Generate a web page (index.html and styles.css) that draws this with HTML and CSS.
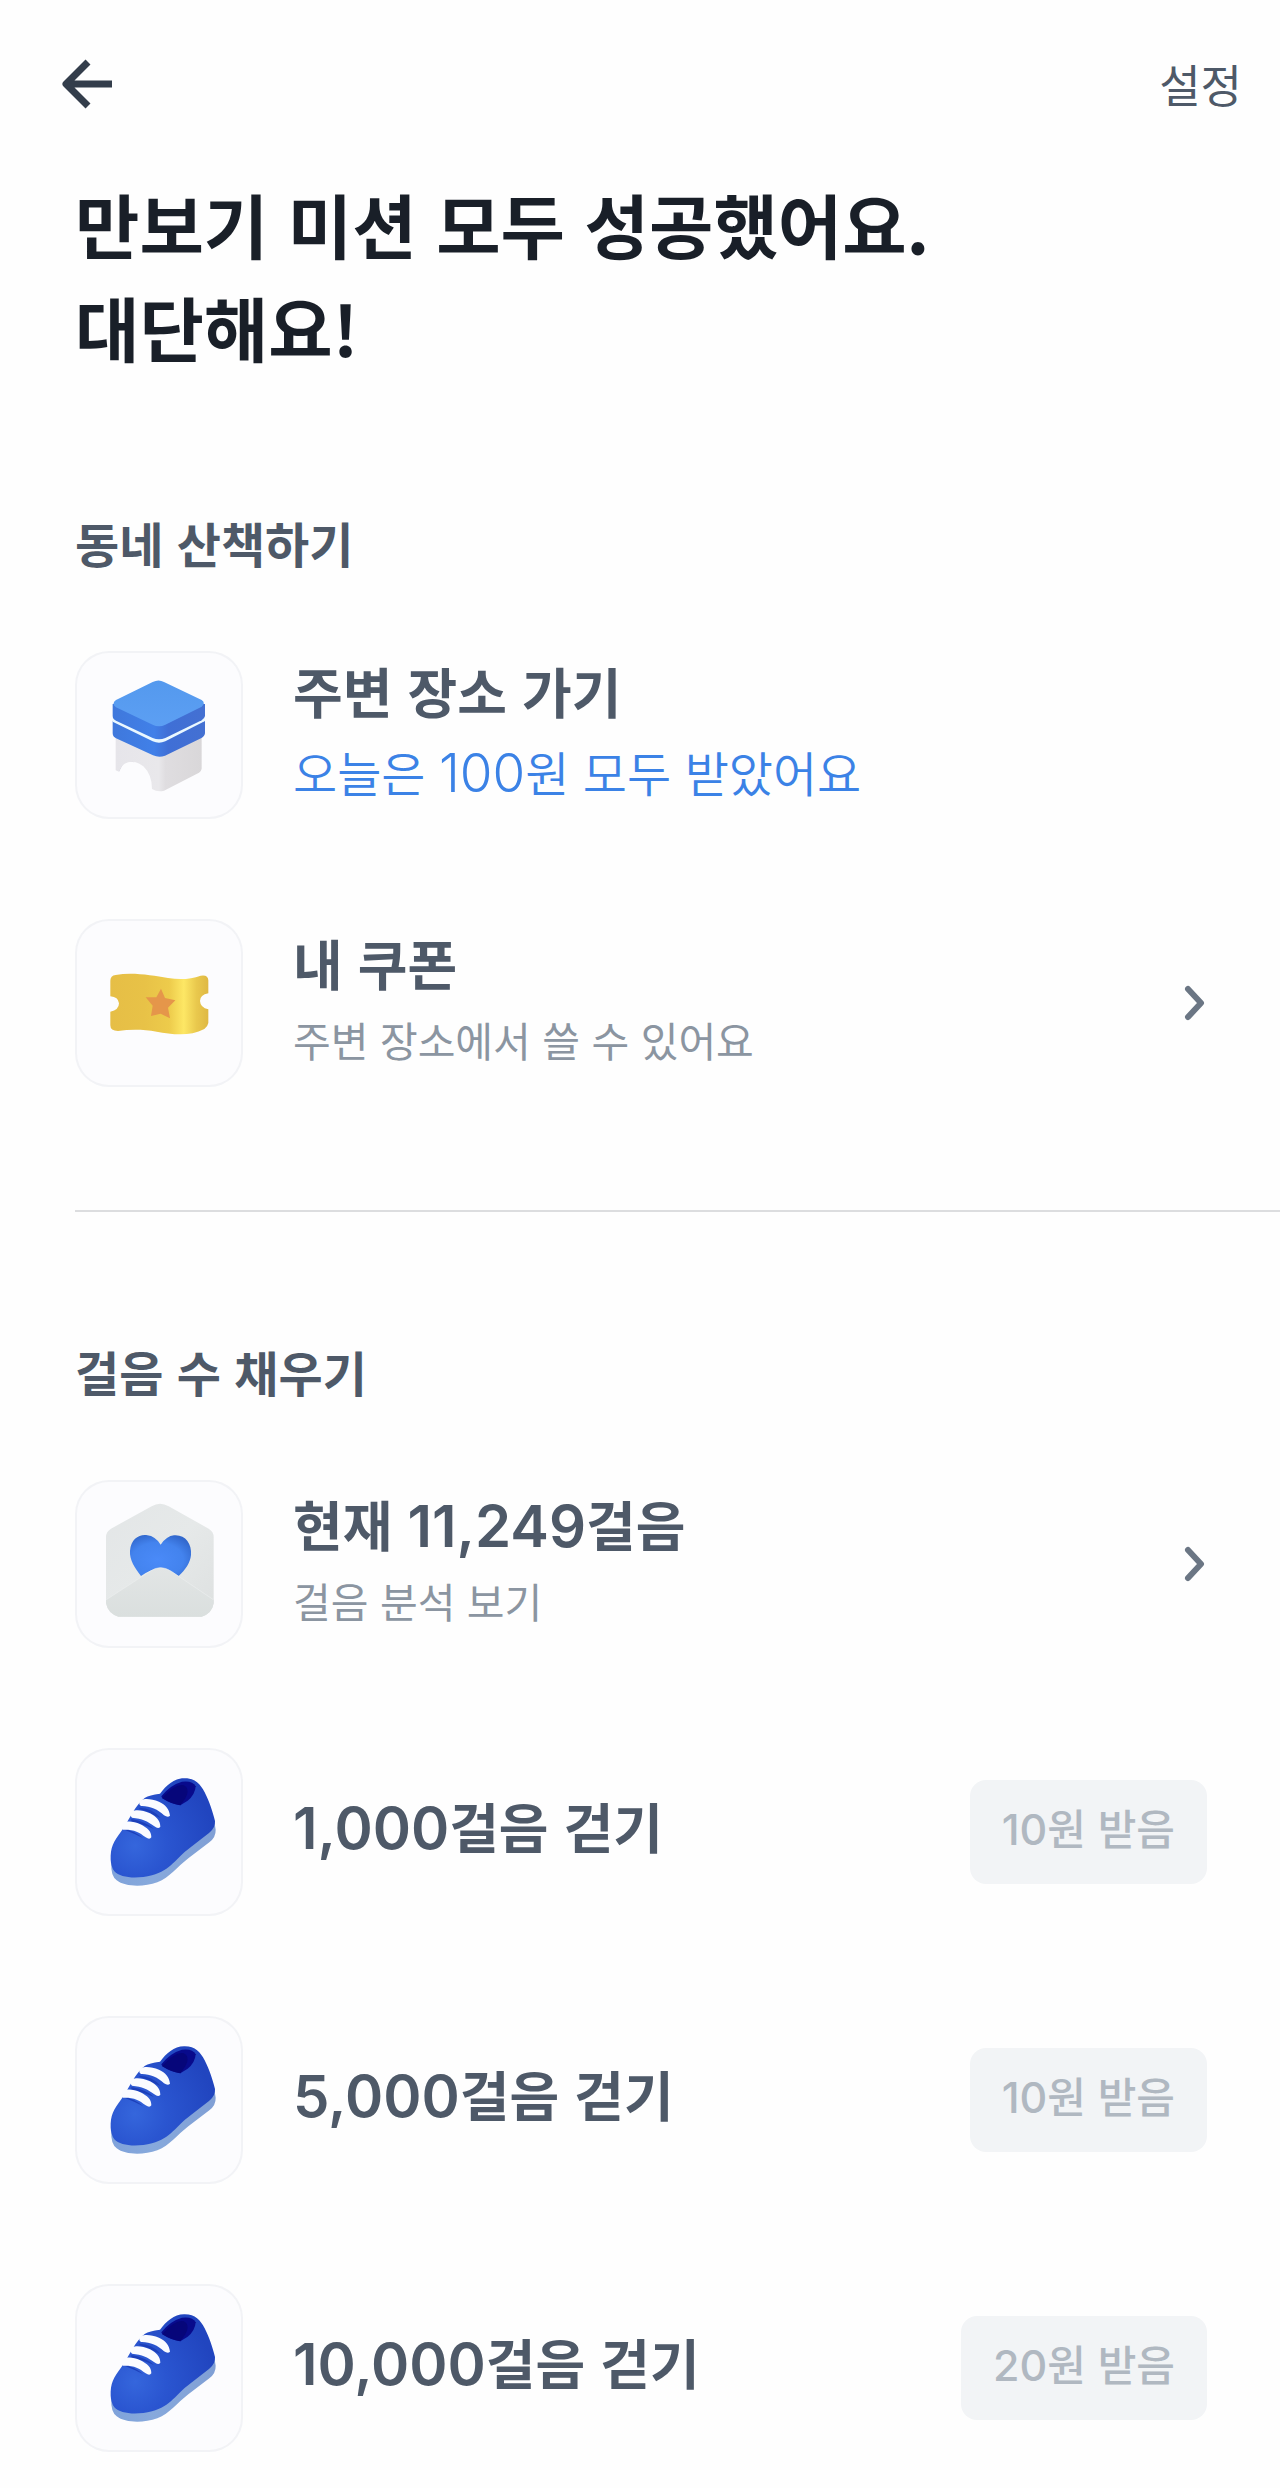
FILE: index.html
```html
<!DOCTYPE html>
<html lang="ko">
<head>
<meta charset="utf-8">
<meta name="viewport" content="width=device-width, initial-scale=1">
<title>만보기</title>
<link rel="stylesheet" href="styles.css">
</head>
<body>
<svg class="defs" width="0" height="0" aria-hidden="true">
  <defs>
    <linearGradient id="seatTop" x1="0" y1="0" x2="0" y2="1"><stop offset="0" stop-color="#5499ee"/><stop offset="1" stop-color="#5c9ff3"/></linearGradient>
    <linearGradient id="seatSide" x1="0" y1="0" x2="1" y2="0"><stop offset="0" stop-color="#3f78dc"/><stop offset=".45" stop-color="#4180e8"/><stop offset=".6" stop-color="#3f6fd6"/><stop offset="1" stop-color="#4470d2"/></linearGradient>
    <linearGradient id="legs" x1="0" y1="0" x2="1" y2="0"><stop offset="0" stop-color="#e6e5ea"/><stop offset=".5" stop-color="#e9e8eb"/><stop offset=".58" stop-color="#dfdde0"/><stop offset="1" stop-color="#d9d7d9"/></linearGradient>
    <linearGradient id="gold" x1="0" y1="0" x2="1" y2="0"><stop offset="0" stop-color="#e6be46"/><stop offset=".35" stop-color="#e8c247"/><stop offset=".6" stop-color="#edcb4b"/><stop offset=".75" stop-color="#fde765"/><stop offset=".88" stop-color="#e9c84d"/><stop offset="1" stop-color="#dfb843"/></linearGradient>
    <linearGradient id="paper" x1="0" y1="0" x2="1" y2="1"><stop offset="0" stop-color="#e3e6e7"/><stop offset=".5" stop-color="#e6e9e9"/><stop offset="1" stop-color="#dde0e0"/></linearGradient>
    <linearGradient id="fold" x1="0" y1="0" x2="0" y2="1"><stop offset="0" stop-color="#e2e5e5"/><stop offset="1" stop-color="#dadfde"/></linearGradient>
    <radialGradient id="heart" cx=".45" cy=".6" r=".65"><stop offset="0" stop-color="#4a8af8"/><stop offset=".65" stop-color="#4383ee"/><stop offset="1" stop-color="#3268cd"/></radialGradient>
    <radialGradient id="shoe" gradientUnits="userSpaceOnUse" cx="225" cy="330" r="240"><stop offset="0" stop-color="#3566dc"/><stop offset=".4" stop-color="#2a55d0"/><stop offset="1" stop-color="#2145bf"/></radialGradient>
    <linearGradient id="sole" x1="0" y1="0" x2="1" y2="0"><stop offset="0" stop-color="#7fa2da"/><stop offset=".4" stop-color="#87a9dc"/><stop offset="1" stop-color="#809fd5"/></linearGradient>
    <symbol id="icon-shoe" viewBox="45 37 504 504">
      <path fill="url(#sole)" d="M154 385Q152 420 170 434C195 454 250 455 292 440C330 425 350 395 385 368L448 320Q468 304 467 282Q466 262 452 250L180 370Z"/>
      <path fill="url(#shoe)" d="M152 372C151 335 160 318 185 285C208 252 225 208 255 186Q268 178 300 174C318 150 342 128 372 128C405 127 421 145 434 170C449 201 457 224 465 256Q467 276 447 292L390 336C349 366 333 403 276 419C230 431 181 427 163 407Q153 393 152 372Z"/>
      <path fill="#080a8c" d="M304 182Q330 148 366 138Q398 134 407 152Q405 178 383 195L361 209Q330 204 307 188Z"/>
      <path fill="#06067a" d="M316 177Q345 146 370 148Q392 158 376 188L361 209Q336 205 307 188Z"/>
      <g fill="#1c3fb9"><path d="M238 216Q277 217 302 247L285 240Q262 226 238 220Z"/><path d="M214 250Q258 258 282 280L262 272Q232 260 214 258Z"/><path d="M188 280Q220 283 250 308L224 295Z"/></g>
      <g fill="#fafbff"><path d="M238 202C240 186 270 187 297 198C317 207 328 221 330 240Q324 247 312 239C294 221 268 210 243 211Q237 208 238 202Z"/><path d="M212 236C214 219 243 221 270 233C288 243 301 254 301 273Q295 281 283 272C262 256 247 249 216 246Q210 242 212 236Z"/><path d="M184 274C184 255 213 253 241 266C262 277 274 286 274 305Q269 313 257 305C237 289 222 281 189 282Q184 279 184 274Z"/></g>
    </symbol>
    <symbol id="icon-chevron" viewBox="0 0 24 40"><path d="M5 6L18 20L5 34" fill="none" stroke="#6b7684" stroke-width="6" stroke-linecap="round" stroke-linejoin="round"/></symbol>
  </defs>
</svg>

<header class="topbar">
  <button class="back" type="button" aria-label="뒤로">
    <svg viewBox="0 0 52 52" aria-hidden="true"><path d="M26 4L4 26L26 48M4 26H50" fill="none" stroke="#333d4b" stroke-width="7" stroke-linejoin="round"/></svg>
  </button>
  <a class="settings" href="#settings">설정</a>
</header>

<main>
  <h1 class="headline">만보기 미션 모두 성공했어요.<br>대단해요!</h1>

  <section class="section">
    <h2 class="section-title">동네 산책하기</h2>
    <ul class="list">
      <li class="row">
        <span class="tile"><svg viewBox="45 31 504 504" aria-hidden="true">
          <path fill="#c9c7d4" d="M177 393L190 368Q205 358 222 365L250 340L170 320Z"/>
          <path fill="url(#legs)" d="M167 285H425V384Q424 391 417 396L312 450Q293 455 276 445Q276 402 250 377Q220 354 194 369Q185 374 177 393L167 389Z"/>
          <path fill="url(#seatSide)" d="M158 240L295 300L435 240V278Q434 287 423 293L315 345Q297 352 279 344L168 293Q158 288 158 278Z"/>
          <path fill="#eaf8ff" d="M158 232L280 291Q297 297 314 289L435 231V241L316 302Q297 310 278 302L158 243Z"/>
          <path fill="url(#seatSide)" d="M158 190L435 190V226Q434 233 425 239L316 292Q297 300 278 292L168 240Q158 235 158 226Z"/>
          <path fill="url(#seatTop)" d="M168 178L278 124Q296 115 312 124L425 178Q438 187 425 198L316 252Q297 261 278 252L168 200Q153 189 168 178Z"/>
        </svg></span>
        <div class="copy">
          <h3 class="name">주변 장소 가기</h3>
          <p class="note note-accent">오늘은 <span class="num">100</span>원 모두 받았어요</p>
        </div>
      </li>
      <li>
        <a class="row" href="#coupons">
          <span class="tile"><svg viewBox="45 55 504 504" aria-hidden="true">
            <path fill="url(#gold)" d="M151 240Q151 225 167 223C220 214 277 225 324 232C360 238 392 236 422 225Q444 221 445 239V278Q420 283 420 301Q421 321 445 326V367Q443 378 433 385C386 410 333 400 290 393C250 386 210 386 174 391Q151 391 151 374V333Q177 328 177 308Q175 289 151 287Z"/>
            <path fill="#e5964a" d="M303 264L315 292L346 299L324 321L330 353L302 339L273 346L278 315L257 290L289 290Z"/>
          </svg></span>
          <div class="copy">
            <h3 class="name">내 쿠폰</h3>
            <p class="note">주변 장소에서 쓸 수 있어요</p>
          </div>
          <svg class="chevron" aria-hidden="true"><use href="#icon-chevron"/></svg>
        </a>
      </li>
    </ul>
  </section>

  <hr class="divider">

  <section class="section">
    <h2 class="section-title">걸음 수 채우기</h2>
    <ul class="list">
      <li>
        <a class="row" href="#steps">
          <span class="tile"><svg viewBox="45 45 504 504" aria-hidden="true">
            <path fill="url(#paper)" d="M138 216Q138 200 153 191L275 124Q300 109 326 124L446 191Q461 200 461 216V415Q456 446 425 455H175Q144 446 138 415Z"/>
            <path fill="url(#heart)" d="M243 333C225 308 208 286 210 257C213 222 238 207 262 211Q285 213 302 239Q320 213 342 211C375 208 396 235 393 270C391 292 377 314 355 334Q300 290 243 333Z"/>
            <path fill="url(#fold)" d="M138 405L270 319Q301 297 334 319L461 405V415Q456 446 425 455H175Q144 446 138 415Z"/>
            <path fill="none" stroke="#eceeee" stroke-width="2" d="M139 404L270 319Q301 297 334 319L460 404"/>
          </svg></span>
          <div class="copy">
            <h3 class="name">현재 <span class="num">11,249</span>걸음</h3>
            <p class="note">걸음 분석 보기</p>
          </div>
          <svg class="chevron" aria-hidden="true"><use href="#icon-chevron"/></svg>
        </a>
      </li>
      <li class="row">
        <span class="tile"><svg aria-hidden="true"><use href="#icon-shoe"/></svg></span>
        <h3 class="copy name"><span class="num">1,000</span>걸음 걷기</h3>
        <button class="reward" type="button" disabled><span class="num">10</span>원 받음</button>
      </li>
      <li class="row">
        <span class="tile"><svg aria-hidden="true"><use href="#icon-shoe"/></svg></span>
        <h3 class="copy name"><span class="num">5,000</span>걸음 걷기</h3>
        <button class="reward" type="button" disabled><span class="num">10</span>원 받음</button>
      </li>
      <li class="row">
        <span class="tile"><svg aria-hidden="true"><use href="#icon-shoe"/></svg></span>
        <h3 class="copy name"><span class="num">10,000</span>걸음 걷기</h3>
        <button class="reward" type="button" disabled><span class="num">20</span>원 받음</button>
      </li>
    </ul>
  </section>
</main>
</body>
</html>
```

FILE: styles.css
```css
* {
  box-sizing: border-box;
}

body {
  margin: 0;
  background: #fefefe;
  color: #4e5968;
  font-family: "Noto Sans CJK KR", sans-serif;
}

h1, h2, h3, p, ul {
  margin: 0;
  padding: 0;
}

ul {
  list-style: none;
}

a {
  color: inherit;
  text-decoration: none;
}

button {
  border: 0;
  font-family: inherit;
}

.defs {
  position: absolute;
}

.topbar {
  display: flex;
  align-items: center;
  justify-content: space-between;
  height: 168px;
  padding: 0 38px 0 62px;
}

.back {
  padding: 0;
  background: none;
}

.back svg {
  display: block;
  width: 52px;
  height: 52px;
}

.settings {
  color: #4e5968;
  font-size: 45px;
  line-height: 60px;
}

.headline {
  padding: 4px 75px 5px;
  color: #191f28;
  font-size: 70px;
  font-weight: 700;
  line-height: 103px;
}

.section {
  padding: 0 73px 0 75px;
}

.section-title {
  padding-top: 123px;
  font-size: 48px;
  font-weight: 700;
  line-height: 72px;
}

.list {
  display: flex;
  flex-direction: column;
  gap: 100px;
  padding-top: 73px;
}

.row {
  display: flex;
  align-items: center;
}

.tile {
  flex: none;
  width: 168px;
  height: 168px;
  border-radius: 34px;
  background: #fcfcfe;
  box-shadow: inset 0 0 0 2px #f2f3f6;
}

.tile svg {
  display: block;
  width: 168px;
  height: 168px;
}

.copy {
  flex: 1;
  min-width: 0;
  padding: 0 0 8px 50px;
}

.name {
  font-size: 54px;
  font-weight: 700;
  line-height: 80px;
}

.copy.name {
  padding-bottom: 12px;
}

.name .num {
  font-size: 58px;
  font-weight: 600;
}

.num {
  font-family: Inter, sans-serif;
  line-height: 1;
}

.note {
  color: #8b95a1;
  font-size: 41px;
  line-height: 72px;
}

.note-accent {
  color: #3b82e6;
  font-size: 48px;
  font-weight: 350;
  line-height: 80px;
}

.note .num {
  font-size: 53px;
}

.chevron {
  flex: none;
  width: 24px;
  height: 40px;
}

.divider {
  height: 2px;
  margin: 123px 0 0 75px;
  border: 0;
  background: #dcdddf;
}

.reward {
  flex: none;
  height: 104px;
  padding: 0 32px 12px;
  border-radius: 16px;
  background: #f2f4f6;
  color: #b0b8c1;
  font-size: 42px;
  font-weight: 500;
}

.reward .num {
  font-size: 43px;
}

main {
  padding-bottom: 36px;
}
```
